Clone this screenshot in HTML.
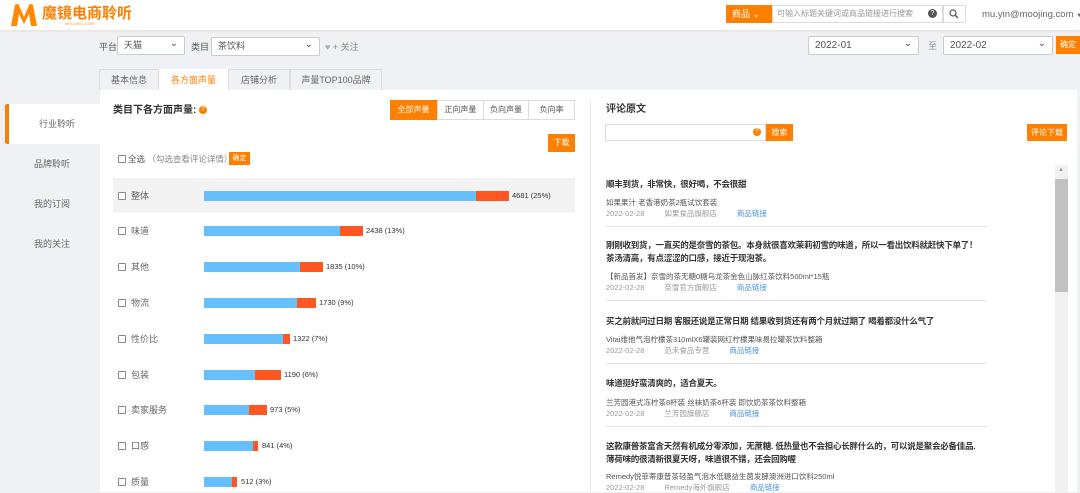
<!DOCTYPE html>
<html><head><meta charset="utf-8"><style>
*{margin:0;padding:0;box-sizing:border-box}
body{width:1080px;height:492px;overflow:hidden;background:#f0f1f4;font-family:"Liberation Sans","Noto Sans CJK SC",sans-serif;font-size:9px;color:#333;position:relative;line-height:1.15}
.a{position:absolute;white-space:nowrap}
.hdr{left:0;top:0;width:1080px;height:30px;background:#fff;box-shadow:0 1px 3px #e8ddd0}
.sel{background:#fff;border:1px solid #ccc;border-radius:2px;height:19px;font-size:9px;color:#555;padding:0 6px;line-height:17px}
.sel::after{content:"⌄";position:absolute;right:6px;top:-2px;font-size:10px;color:#555}
.ob{background:#ff7f00;color:#fff;text-align:center}
.tab{top:69px;height:22px;background:#f0f1f4;border:1px solid #ddd;border-bottom:none;font-size:9px;color:#666;text-align:center;line-height:21px}
.cb{width:8px;height:8px;border:1px solid #888;border-radius:1px;background:#fff}
.bar{height:10px}
.lb{font-size:9px;color:#666;line-height:10px}
.v{font-size:7.5px;line-height:10px}
.t{font-size:8.5px;font-weight:bold;color:#333;line-height:12px;letter-spacing:-0.25px}
.p{font-size:7.5px;color:#555;line-height:10px}
.m{font-size:7.5px;color:#999;line-height:10px}
.m span{margin-right:20px}
.m b{font-weight:normal;color:#4a90e2}
.hr{left:606px;width:381px;height:1px;background:#e3e3e3}
</style></head><body>
<div class="a hdr"></div>
<svg class="a" style="left:9px;top:3px" width="30" height="24" viewBox="0 0 30 24"><path d="M2 23 L6 2 Q8 0 10 2 L15 14 L20 2 Q22 0 24 2 L28 23 L22 23 L20 11 L15 21 L10 11 L8 23Z" fill="#ff8a00"/></svg>
<div class="a" style="left:42px;top:5px;font-size:15px;font-weight:bold;color:#ff7f00;line-height:18px">魔镜电商聆听</div>
<div class="a" style="left:65px;top:22px;font-size:4px;color:#f0a040">MOOJING.COM</div>
<div class="a ob" style="left:726px;top:5px;width:46px;height:18px;font-size:9px;line-height:18px;text-align:left;padding-left:6px">商品 ⌄</div>
<div class="a" style="left:772px;top:5px;width:171px;height:18px;border:1px solid #ddd;background:#fff;font-size:8px;color:#999;line-height:16px;padding-left:4px">可输入标题关键词或商品链接进行搜索</div>
<div class="a" style="left:928px;top:9px;width:9px;height:9px;border-radius:50%;background:#555;color:#fff;font-size:7px;text-align:center;line-height:9px">?</div>
<div class="a" style="left:943px;top:5px;width:23px;height:18px;border:1px solid #ddd;background:#fff"></div>
<svg class="a" style="left:949px;top:9px" width="10" height="10"><circle cx="4" cy="4" r="3" fill="none" stroke="#555" stroke-width="1.2"/><path d="M6.5 6.5 9 9" stroke="#555" stroke-width="1.3"/></svg>
<div class="a" style="left:982px;top:10px;font-size:9.5px;color:#666">mu.yin@moojing.com <span style="font-size:6px">▼</span></div>

<div class="a" style="left:99px;top:42px;font-size:9px;color:#555">平台</div>
<div class="a sel" style="left:117px;top:36px;width:68px">天猫</div>
<div class="a" style="left:191px;top:42px;font-size:9px;color:#555">类目</div>
<div class="a sel" style="left:211px;top:37px;width:109px">茶饮料</div>
<div class="a" style="left:325px;top:42px;font-size:9px;color:#888"><span style="color:#aaa">♥</span> + 关注</div>
<div class="a sel" style="left:808px;top:36px;width:111px;font-size:10px">2022-01</div>
<div class="a" style="left:928px;top:41px;font-size:9px;color:#999">至</div>
<div class="a sel" style="left:943px;top:36px;width:110px;font-size:10px">2022-02</div>
<div class="a ob" style="left:1056px;top:36px;width:24px;height:18px;font-size:8px;line-height:18px">确定</div>

<div class="a tab" style="left:99px;width:60px">基本信息</div>
<div class="a tab" style="left:159px;width:69px;background:#fff;color:#ff7f00;border-color:#fff">各方面声量</div>
<div class="a tab" style="left:228px;width:62px">店铺分析</div>
<div class="a tab" style="left:290px;width:92px">声量TOP100品牌</div>

<div class="a" style="left:5px;top:104px;width:95px;height:40px;background:#fff;border-left:4px solid #ff7f00;border-radius:2px;font-size:9px;color:#666;padding:15px 0 0 30px;line-height:10px">行业聆听</div>
<div class="a" style="left:34px;top:159px;font-size:9px;color:#666">品牌聆听</div>
<div class="a" style="left:34px;top:199px;font-size:9px;color:#666">我的订阅</div>
<div class="a" style="left:34px;top:239px;font-size:9px;color:#666">我的关注</div>

<div class="a" style="left:100px;top:90px;width:977px;height:402px;background:#fff"></div>
<div class="a" style="left:590px;top:100px;width:1px;height:392px;background:#e6e6e6"></div>

<div class="a" style="left:113px;top:105px;font-size:10px;font-weight:bold;color:#333;line-height:12px">类目下各方面声量:</div>
<div class="a" style="left:199px;top:106px;width:8px;height:8px;border-radius:50%;background:#ff7f00;color:#fff;font-size:6px;text-align:center;line-height:8px">?</div>
<div class="a ob" style="left:390px;top:100px;width:47px;height:20px;font-size:8px;line-height:20px">全部声量</div>
<div class="a" style="left:437px;top:100px;width:138px;height:20px;border:1px solid #ddd;font-size:8px;color:#555;display:flex">
<div style="flex:1;text-align:center;line-height:18px;border-right:1px solid #ddd">正向声量</div><div style="flex:1;text-align:center;line-height:18px;border-right:1px solid #ddd">负向声量</div><div style="flex:1;text-align:center;line-height:18px">负向率</div></div>
<div class="a ob" style="left:548px;top:134px;width:27px;height:18px;font-size:8px;line-height:18px">下载</div>
<div class="a cb" style="left:118px;top:155px"></div>
<div class="a" style="left:128px;top:154px;font-size:8.5px;color:#555;line-height:10px">全选 <span style="color:#888">（勾选查看评论详情）</span></div>
<div class="a ob" style="left:229px;top:152px;width:21px;height:13px;font-size:7px;line-height:13px">确定</div>

<div class="a" style="left:113px;top:178px;width:462px;height:35px;background:#f3f3f3"></div>

<div class="a cb" style="left:118px;top:192px"></div><div class="a lb" style="left:131px;top:191px">整体</div>
<div class="a bar" style="left:204px;top:191px;width:272px;background:#66bfff"></div><div class="a bar" style="left:476px;top:191px;width:33px;background:#ff5722"></div><div class="a v" style="left:512px;top:191px">4681 (25%)</div>

<div class="a cb" style="left:118px;top:227px"></div><div class="a lb" style="left:131px;top:226px">味道</div>
<div class="a bar" style="left:204px;top:226px;width:136px;background:#66bfff"></div><div class="a bar" style="left:340px;top:226px;width:23px;background:#ff5722"></div><div class="a v" style="left:366px;top:226px">2438 (13%)</div>

<div class="a cb" style="left:118px;top:263px"></div><div class="a lb" style="left:131px;top:262px">其他</div>
<div class="a bar" style="left:204px;top:262px;width:96px;background:#66bfff"></div><div class="a bar" style="left:300px;top:262px;width:23px;background:#ff5722"></div><div class="a v" style="left:326px;top:262px">1835 (10%)</div>

<div class="a cb" style="left:118px;top:299px"></div><div class="a lb" style="left:131px;top:298px">物流</div>
<div class="a bar" style="left:204px;top:298px;width:93px;background:#66bfff"></div><div class="a bar" style="left:297px;top:298px;width:19px;background:#ff5722"></div><div class="a v" style="left:319px;top:298px">1730 (9%)</div>

<div class="a cb" style="left:118px;top:335px"></div><div class="a lb" style="left:131px;top:334px">性价比</div>
<div class="a bar" style="left:204px;top:334px;width:79px;background:#66bfff"></div><div class="a bar" style="left:283px;top:334px;width:7px;background:#ff5722"></div><div class="a v" style="left:293px;top:334px">1322 (7%)</div>

<div class="a cb" style="left:118px;top:371px"></div><div class="a lb" style="left:131px;top:370px">包装</div>
<div class="a bar" style="left:204px;top:370px;width:51px;background:#66bfff"></div><div class="a bar" style="left:255px;top:370px;width:26px;background:#ff5722"></div><div class="a v" style="left:284px;top:370px">1190 (6%)</div>

<div class="a cb" style="left:118px;top:406px"></div><div class="a lb" style="left:131px;top:405px">卖家服务</div>
<div class="a bar" style="left:204px;top:405px;width:45px;background:#66bfff"></div><div class="a bar" style="left:249px;top:405px;width:18px;background:#ff5722"></div><div class="a v" style="left:270px;top:405px">973 (5%)</div>

<div class="a cb" style="left:118px;top:442px"></div><div class="a lb" style="left:131px;top:441px">口感</div>
<div class="a bar" style="left:204px;top:441px;width:49px;background:#66bfff"></div><div class="a bar" style="left:253px;top:441px;width:5px;background:#ff5722"></div><div class="a v" style="left:262px;top:441px">841 (4%)</div>

<div class="a cb" style="left:118px;top:478px"></div><div class="a lb" style="left:131px;top:477px">质量</div>
<div class="a bar" style="left:204px;top:477px;width:28px;background:#66bfff"></div><div class="a bar" style="left:232px;top:477px;width:5px;background:#ff5722"></div><div class="a v" style="left:241px;top:477px">512 (3%)</div>

<div class="a" style="left:606px;top:104px;font-size:10px;font-weight:bold;color:#333;line-height:12px">评论原文</div>
<div class="a" style="left:605px;top:124px;width:161px;height:17px;border:1px solid #ddd;background:#fff"></div>
<div class="a" style="left:753px;top:128px;width:8px;height:8px;border-radius:50%;background:#ff7f00;color:#fff;font-size:6px;text-align:center;line-height:8px">?</div>
<div class="a ob" style="left:766px;top:124px;width:27px;height:17px;font-size:8px;line-height:17px">搜索</div>
<div class="a ob" style="left:1027px;top:124px;width:40px;height:17px;font-size:8px;line-height:17px">评论下载</div>

<div class="a" style="left:1055px;top:165px;width:13px;height:327px;background:#f1f1f1"></div>
<div class="a" style="left:1055px;top:179px;width:13px;height:113px;background:#c1c1c1"></div>
<div class="a" style="left:1058px;top:167px;font-size:6px;color:#999">▲</div>

<div class="a t" style="left:606px;top:178px">顺丰到货，非常快，很好喝，不会很甜</div>
<div class="a p" style="left:606px;top:198px">如果果汁 老香港奶茶2瓶试饮套装</div>
<div class="a m" style="left:606px;top:209px"><span>2022-02-28</span><span>如果食品旗舰店</span><b>商品链接</b></div>
<div class="a hr" style="top:226px"></div>

<div class="a t" style="left:606px;top:239px">刚刚收到货，一直买的是奈雪的茶包。本身就很喜欢茉莉初雪的味道，所以一看出饮料就赶快下单了！</div>
<div class="a t" style="left:606px;top:252px">茶汤清高，有点涩涩的口感，接近于现泡茶。</div>
<div class="a p" style="left:606px;top:272px">【新品首发】奈雪的茶无糖0糖乌龙茶金色山脉红茶饮料500ml*15瓶</div>
<div class="a m" style="left:606px;top:283px"><span>2022-02-28</span><span>奈雪官方旗舰店</span><b>商品链接</b></div>
<div class="a hr" style="top:300px"></div>

<div class="a t" style="left:606px;top:315px">买之前就问过日期 客服还说是正常日期 结果收到货还有两个月就过期了 喝着都没什么气了</div>
<div class="a p" style="left:606px;top:335px">Vitai维他气泡柠檬茶310mlX6罐装网红柠檬果味易拉罐茶饮料整箱</div>
<div class="a m" style="left:606px;top:346px"><span>2022-02-28</span><span>范禾食品专营</span><b>商品链接</b></div>
<div class="a hr" style="top:363px"></div>

<div class="a t" style="left:606px;top:377px">味道挺好蛮清爽的，适合夏天。</div>
<div class="a p" style="left:606px;top:398px">兰芳园港式冻柠茶8杯装 丝袜奶茶6杯装 即饮奶茶茶饮料整箱</div>
<div class="a m" style="left:606px;top:409px"><span>2022-02-28</span><span>兰芳园旗舰店</span><b>商品链接</b></div>
<div class="a hr" style="top:426px"></div>

<div class="a t" style="left:606px;top:440px">这款康普茶富含天然有机成分零添加，无蔗糖. 低热量也不会担心长胖什么的，可以说是聚会必备佳品.</div>
<div class="a t" style="left:606px;top:453px">薄荷味的很清新很夏天呀，味道很不错，还会回购喔</div>
<div class="a p" style="left:606px;top:472px">Remedy悦菲蒂康普茶轻盈气泡水低糖益生菌发酵澳洲进口饮料250ml</div>
<div class="a m" style="left:606px;top:483px"><span>2022-02-28</span><span>Remedy海外旗舰店</span><b>商品链接</b></div>
</body></html>
